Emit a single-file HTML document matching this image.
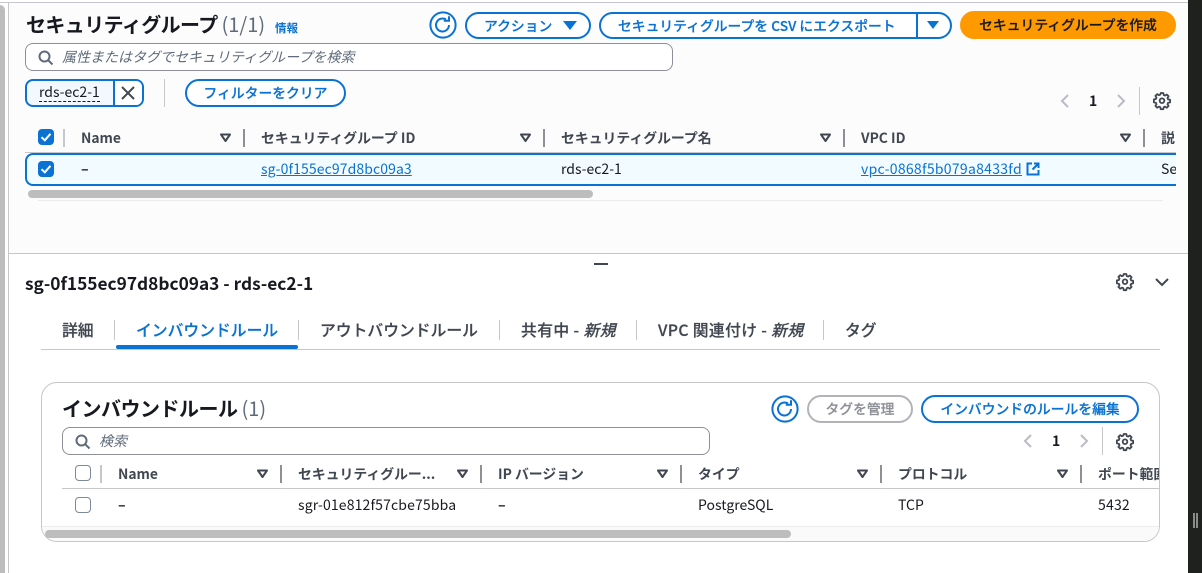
<!DOCTYPE html>
<html lang="ja"><head><meta charset="utf-8"><style>
html,body{margin:0;padding:0;width:1202px;height:573px;overflow:hidden;background:#fff}
body{position:relative;font-family:"Noto Sans CJK JP","Liberation Sans",sans-serif;font-size:14px;color:#16191f}
.a{position:absolute}
.t{position:absolute;white-space:nowrap;line-height:20px}
.btn{position:absolute;box-sizing:border-box;border:2px solid #0972d3;border-radius:14px;color:#0972d3;font-weight:500;-webkit-text-stroke:.2px currentColor;font-size:13.800px;text-align:center;line-height:22px;white-space:nowrap;background:#fff}
.h{font-weight:700;color:#414750;font-size:13.850px}
.sep{position:absolute;width:2px;height:18px;background:#8d9096}
.link{color:#0972d3;text-decoration:underline}
svg{position:absolute;overflow:visible}
.cb{position:absolute;box-sizing:border-box;width:16px;height:16px;border-radius:4px;background:#0972d3}
.cbo{position:absolute;box-sizing:border-box;width:16px;height:16px;border-radius:4px;background:#fff;border:1.500px solid #7d8998}
.search{position:absolute;box-sizing:border-box;border:1px solid #8d9096;border-radius:8px;background:#fff}
i.ph{font-style:italic;color:#5f6b7a;font-size:14px}
.tab{position:absolute;white-space:nowrap;font-weight:500;-webkit-text-stroke:.2px currentColor;color:#414750;font-size:15.800px;line-height:20px}
.ts{position:absolute;width:1px;height:20px;background:#c6c6cd;top:320px}
</style></head><body>
<svg width="0" height="0" style="position:absolute"><defs>
<g id="tri"><path d="M1 1.500H10L5.500 8Z" fill="none" stroke="#414750" stroke-width="2" stroke-linejoin="round"/></g>
<g id="ref"><circle cx="14" cy="14" r="12.600" fill="#fff" stroke="#0972d3" stroke-width="2"/><path d="M20 14a6.500 6.500 0 1 1-3-5.500" fill="none" stroke="#0972d3" stroke-width="2"/><path d="M14.800 9.800H20V5.200" fill="none" stroke="#0972d3" stroke-width="2"/></g>
<g id="gear"><path d="M6.700 1h2.600l.4 2 1.400.6 1.700-1.100 1.800 1.800-1.100 1.700.6 1.400 2 .4v2.600l-2 .4-.6 1.400 1.100 1.700-1.800 1.800-1.700-1.100-1.400.6-.4 2H6.700l-.4-2-1.400-.6-1.700 1.100-1.800-1.800 1.100-1.700-.6-1.400-2-.4V7.400l2-.4.6-1.400-1.100-1.700 1.800-1.800 1.700 1.100 1.400-.6Z" fill="none" stroke="#414750" stroke-width="1.800" stroke-linejoin="round"/><circle cx="8" cy="8.700" r="2.300" fill="none" stroke="#414750" stroke-width="1.800"/></g>
<g id="mag"><circle cx="6.500" cy="6.500" r="5" fill="none" stroke="#5f6b7a" stroke-width="2"/><path d="M10.200 10.200L14.500 14.500" stroke="#5f6b7a" stroke-width="2"/></g>
<g id="chk"><path d="M3.500 8.200L6.800 11.300L12.500 4.800" fill="none" stroke="#fff" stroke-width="2"/></g>
</defs></svg>

<!-- upper background -->
<div class="a" style="left:8px;top:2px;width:1180px;height:251px;background:#fcfcfd"></div>
<div class="a" style="left:0;top:2px;width:1188px;height:1px;background:#c6c6cd"></div>
<div class="a" style="left:0;top:5px;width:5px;height:568px;background:#bdbdbd;border-radius:0 5px 0 0"></div>
<div class="a" style="left:8px;top:2px;width:1px;height:571px;background:#c6c6cd"></div>
<div class="a" style="left:9px;top:253px;width:1179px;height:1px;background:#c6c6cd"></div>
<div class="a" style="left:1188px;top:0;width:14px;height:573px;background:#1f211f"></div>
<div class="a" style="left:1193px;top:513px;width:2px;height:15px;background:#8a8a8a"></div>
<div class="a" style="left:1196px;top:513px;width:2px;height:15px;background:#8a8a8a"></div>

<!-- header -->
<div class="t" style="left:26px;top:12px;font-size:20px;line-height:24px;font-weight:700;letter-spacing:-.6px">セキュリティグループ <span style="color:#5f6b7a;font-weight:400;letter-spacing:0">(1/1)</span></div>
<div class="t" style="left:275px;top:18px;font-size:11.500px;font-weight:700;color:#0972d3">情報</div>
<svg style="left:429px;top:11px" width="28" height="28"><use href="#ref"/></svg>
<div class="btn" style="left:465px;top:12px;width:126px;height:27px;text-align:left;padding-left:17px">アクション</div>
<svg style="left:563px;top:21px" width="14" height="10"><path d="M0 0H14L7 9Z" fill="#0972d3"/></svg>
<div class="btn" style="left:599px;top:12px;width:353px;height:27px;text-align:left;padding-left:17px">セキュリティグループを CSV にエクスポート</div>
<div class="a" style="left:916px;top:12px;width:2px;height:27px;background:#0972d3"></div>
<svg style="left:926px;top:21px" width="14" height="10"><path d="M1 0H13L7 8Z" fill="#0972d3"/></svg>
<div class="btn" style="left:960px;top:11px;width:216px;height:28px;background:#ff9900;border-color:#ff9900;color:#16191f;line-height:23px">セキュリティグループを作成</div>

<!-- search -->
<div class="search" style="left:25px;top:43px;width:648px;height:28px"></div>
<svg style="left:38px;top:50px" width="16" height="16"><use href="#mag"/></svg>
<div class="t" style="left:62px;top:47px"><i class="ph">属性またはタグでセキュリティグループを検索</i></div>

<!-- chip -->
<div class="a" style="left:25px;top:79px;width:119px;height:28px;box-sizing:border-box;border:2px solid #0972d3;border-radius:8px;background:#f2f8fd"></div>
<div class="a" style="left:113px;top:79px;width:2px;height:28px;background:#0972d3"></div>
<div class="a" style="left:115px;top:81px;width:27px;height:24px;background:#fff;border-radius:0 6px 6px 0"></div>
<div class="t" style="left:39px;top:83px;font-size:14px;border-bottom:1px dashed #16191f;line-height:18px">rds-ec2-1</div>
<svg style="left:121px;top:86px" width="14" height="14"><path d="M1 1L13 13M13 1L1 13" stroke="#414750" stroke-width="2"/></svg>
<div class="a" style="left:164px;top:79px;width:1px;height:28px;background:#c6c6cd"></div>
<div class="btn" style="left:185px;top:79px;width:161px;height:28px;line-height:23px">フィルターをクリア</div>

<!-- pagination top -->
<svg style="left:1060px;top:94px" width="10" height="14"><path d="M8 1L2 7L8 13" fill="none" stroke="#b9bdc3" stroke-width="2"/></svg>
<div class="t" style="left:1089px;top:91px;font-weight:700;font-size:14px">1</div>
<svg style="left:1116px;top:94px" width="10" height="14"><path d="M2 1L8 7L2 13" fill="none" stroke="#b9bdc3" stroke-width="2"/></svg>
<div class="a" style="left:1139px;top:87px;width:1px;height:28px;background:#c6c6cd"></div>
<svg style="left:1154px;top:92px" width="16" height="17"><use href="#gear"/></svg>

<!-- table header top -->
<div class="cb" style="left:38px;top:129px"></div><svg style="left:38px;top:129px" width="16" height="16"><use href="#chk"/></svg>
<div class="a" style="left:63px;top:129px;width:2px;height:18px;background:#c6c6cd"></div>
<div class="t h" style="left:81px;top:127px">Name</div>
<svg style="left:220px;top:133px" width="11" height="10"><use href="#tri"/></svg>
<div class="sep" style="left:243px;top:129px"></div>
<div class="t h" style="left:261px;top:127px">セキュリティグループ ID</div>
<svg style="left:520px;top:133px" width="11" height="10"><use href="#tri"/></svg>
<div class="sep" style="left:543px;top:129px"></div>
<div class="t h" style="left:561px;top:127px">セキュリティグループ名</div>
<svg style="left:820px;top:133px" width="11" height="10"><use href="#tri"/></svg>
<div class="sep" style="left:843px;top:129px"></div>
<div class="t h" style="left:861px;top:127px">VPC ID</div>
<svg style="left:1120px;top:133px" width="11" height="10"><use href="#tri"/></svg>
<div class="sep" style="left:1143px;top:129px"></div>
<div class="t h" style="left:1161px;top:127px">説</div>
<div class="a" style="left:25px;top:152px;width:1151px;height:1px;background:#c6c6cd"></div>

<!-- selected row -->
<div class="a" style="left:25px;top:153px;width:1151px;height:33px;box-sizing:border-box;border:2px solid #0972d3;border-right:0;border-radius:8px 0 0 8px;background:#f2fbff"></div>
<div class="cb" style="left:38px;top:161px"></div><svg style="left:38px;top:161px" width="16" height="16"><use href="#chk"/></svg>
<div class="t" style="left:81px;top:159px;font-weight:700">–</div>
<div class="t link" style="left:261px;top:159px;letter-spacing:.1px">sg-0f155ec97d8bc09a3</div>
<div class="t" style="left:561px;top:159px">rds-ec2-1</div>
<div class="t link" style="left:861px;top:159px;letter-spacing:.28px">vpc-0868f5b079a8433fd</div>
<svg style="left:1026px;top:162px" width="14" height="14"><path d="M6 1.500H1.500V12.500H12.500V8M8 1.500H12.500V6M12.500 1.500L6.500 7.500" fill="none" stroke="#0972d3" stroke-width="2"/></svg>
<div class="t" style="left:1161px;top:159px;width:15px;overflow:hidden">Se</div>

<!-- scrollbar top -->
<div class="a" style="left:28px;top:190px;width:565px;height:8px;background:#bdbdbd;border-radius:4px"></div>
<div class="a" style="left:38px;top:200px;width:1125px;height:1px;background:#e9ebed"></div>

<!-- lower -->
<div class="a" style="left:594px;top:263px;width:14px;height:2px;background:#414750"></div>
<div class="t" style="left:25px;top:273px;font-size:17.300px;font-weight:700">sg-0f155ec97d8bc09a3 - rds-ec2-1</div>
<svg style="left:1117px;top:273px" width="16" height="17"><use href="#gear"/></svg>
<svg style="left:1155px;top:278px" width="14" height="9"><path d="M1 1L7 7L13 1" fill="none" stroke="#414750" stroke-width="2"/></svg>

<!-- tabs -->
<div class="tab" style="left:62px;top:320px">詳細</div>
<div class="ts" style="left:114px"></div>
<div class="tab" style="left:136px;top:320px;color:#0972d3">インバウンドルール</div>
<div class="ts" style="left:298px"></div>
<div class="tab" style="left:320px;top:320px">アウトバウンドルール</div>
<div class="ts" style="left:499px"></div>
<div class="tab" style="left:521px;top:320px;letter-spacing:.4px">共有中 - <i>新規</i></div>
<div class="ts" style="left:636px"></div>
<div class="tab" style="left:658px;top:320px;letter-spacing:.35px">VPC 関連付け - <i>新規</i></div>
<div class="ts" style="left:823px"></div>
<div class="tab" style="left:845px;top:320px">タグ</div>
<div class="a" style="left:116px;top:345px;width:182px;height:4px;background:#0972d3;border-radius:2px"></div>
<div class="a" style="left:41px;top:349px;width:1119px;height:1px;background:#c6c6cd"></div>

<!-- inbound card -->
<div class="a" style="left:41px;top:382px;width:1119px;height:160px;box-sizing:border-box;border:1px solid #c6c6cd;border-radius:16px;background:#fff"></div>
<div class="t" style="left:62px;top:396px;font-size:20px;line-height:24px;font-weight:700;letter-spacing:-.5px">インバウンドルール <span style="color:#5f6b7a;font-weight:400;letter-spacing:0">(1)</span></div>
<svg style="left:771px;top:395px" width="28" height="28"><use href="#ref"/></svg>
<div class="btn" style="left:807px;top:395px;width:106px;height:28px;border-color:#b0b3b8;color:#8d9096;line-height:23px">タグを管理</div>
<div class="btn" style="left:921px;top:395px;width:218px;height:28px;line-height:23px">インバウンドのルールを編集</div>

<div class="search" style="left:62px;top:427px;width:648px;height:28px"></div>
<svg style="left:75px;top:434px" width="16" height="16"><use href="#mag"/></svg>
<div class="t" style="left:99px;top:431px"><i class="ph">検索</i></div>

<svg style="left:1023px;top:434px" width="10" height="14"><path d="M8 1L2 7L8 13" fill="none" stroke="#b9bdc3" stroke-width="2"/></svg>
<div class="t" style="left:1052px;top:431px;font-weight:700;font-size:14px">1</div>
<svg style="left:1079px;top:434px" width="10" height="14"><path d="M2 1L8 7L2 13" fill="none" stroke="#b9bdc3" stroke-width="2"/></svg>
<div class="a" style="left:1102px;top:427px;width:1px;height:28px;background:#c6c6cd"></div>
<svg style="left:1117px;top:433px" width="16" height="17"><use href="#gear"/></svg>

<div class="cbo" style="left:75px;top:465px"></div>
<div class="a" style="left:100px;top:465px;width:2px;height:18px;background:#c6c6cd"></div>
<div class="t h" style="left:118px;top:463px">Name</div>
<svg style="left:257px;top:469px" width="11" height="10"><use href="#tri"/></svg>
<div class="sep" style="left:280px;top:465px"></div>
<div class="t h" style="left:298px;top:463px">セキュリティグルー...</div>
<svg style="left:457px;top:469px" width="11" height="10"><use href="#tri"/></svg>
<div class="sep" style="left:480px;top:465px"></div>
<div class="t h" style="left:498px;top:463px">IP バージョン</div>
<svg style="left:657px;top:469px" width="11" height="10"><use href="#tri"/></svg>
<div class="sep" style="left:680px;top:465px"></div>
<div class="t h" style="left:698px;top:463px">タイプ</div>
<svg style="left:857px;top:469px" width="11" height="10"><use href="#tri"/></svg>
<div class="sep" style="left:880px;top:465px"></div>
<div class="t h" style="left:898px;top:463px">プロトコル</div>
<svg style="left:1057px;top:469px" width="11" height="10"><use href="#tri"/></svg>
<div class="sep" style="left:1080px;top:465px"></div>
<div class="t h" style="left:1098px;top:463px;width:61px;overflow:hidden">ポート範囲</div>
<div class="a" style="left:62px;top:488px;width:1097px;height:1px;background:#c6c6cd"></div>

<div class="cbo" style="left:75px;top:497px"></div>
<div class="t" style="left:118px;top:495px;font-weight:700">–</div>
<div class="t" style="left:298px;top:495px;letter-spacing:.15px">sgr-01e812f57cbe75bba</div>
<div class="t" style="left:498px;top:495px;font-weight:700">–</div>
<div class="t" style="left:698px;top:495px">PostgreSQL</div>
<div class="t" style="left:898px;top:495px">TCP</div>
<div class="t" style="left:1098px;top:495px;letter-spacing:.2px">5432</div>

<div class="a" style="left:42px;top:526px;width:1117px;height:15px;box-sizing:border-box;border-top:1px solid #e9ebed;background:#fafafa;border-radius:0 0 15px 15px"></div>
<div class="a" style="left:45px;top:530px;width:746px;height:8px;background:#bdbdbd;border-radius:4px"></div>
</body></html>
